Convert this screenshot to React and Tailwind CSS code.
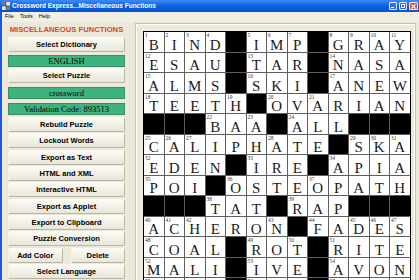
import React from "react";

const ROWS = [
  "BIND#IMP#GRAY",
  "ESAU#TAR#NASA",
  "ALMS#SKI#ANEW",
  "TEETH#OVARIAN",
  "###BAA#ALL###",
  "CALIPHATE#SKA",
  "EDEN#IRE#APIA",
  "POI#OSTEOPATH",
  "###TAT#RAP###",
  "ACHERON#FADES",
  "COAL#ROT#RITE",
  "MALI#IVE#AVON",
  "    #   #    ",
];

function buildCells() {
  const isBlack = (r, c) =>
    r < 0 || c < 0 || c > 12 || (r < ROWS.length && ROWS[r][c] === "#");
  const cells = [];
  let n = 0;
  ROWS.forEach((row, r) => {
    row.split("").forEach((ch, c) => {
      if (ch === "#") {
        cells.push({ black: true });
        return;
      }
      const across = isBlack(r, c - 1) && !isBlack(r, c + 1);
      const down = isBlack(r - 1, c) && !(r + 1 < ROWS.length && isBlack(r + 1, c));
      const num = across || down ? ++n : null;
      cells.push({ black: false, letter: ch.trim(), num });
    });
  });
  return cells;
}

const CELLS = buildCells();

function XpButton({ children, className = "" }) {
  return (
    <div
      className={`h-[15px] flex items-center justify-center rounded-[2px] border border-[#b9b5a4] border-t-[#fbfaf6] border-l-[#f4f2ea] bg-linear-to-b from-[#fbfaf5] to-[#e9e6d9] text-[7.5px] font-bold text-black whitespace-nowrap ${className}`}
    >
      {children}
    </div>
  );
}

function GreenField({ children }) {
  return (
    <div className="h-[12px] flex items-center justify-center border border-[#3a8d63] bg-[#3db47d] font-['Liberation_Serif',serif] text-[8.5px] leading-none text-black whitespace-nowrap">
      {children}
    </div>
  );
}

function TitleButtons() {
  return (
    <div className="flex items-center gap-[2px] pr-[1px]">
      <div className="w-[8px] h-[8px] rounded-[1.5px] border border-white/90 bg-[#2a6ef0] flex items-end pl-[1px] pb-[1px]">
        <div className="w-[3px] h-[1px] bg-white" />
      </div>
      <div className="w-[8px] h-[8px] rounded-[1.5px] border border-white/90 bg-[#2a6ef0] flex items-center justify-center">
        <div className="w-[4px] h-[4px] border border-white border-t-[1.5px]" />
      </div>
      <div className="w-[9px] h-[8px] rounded-[1.5px] border border-white/90 bg-[#d9512c] flex items-center justify-center">
        <svg width="5" height="5" viewBox="0 0 5 5">
          <path d="M0.5 0.5L4.5 4.5M4.5 0.5L0.5 4.5" stroke="#fff" strokeWidth="1.1" />
        </svg>
      </div>
    </div>
  );
}

export default function App() {
  return (
    <div className="w-[419px] h-[280px] overflow-hidden bg-[#ece9d8] font-['Liberation_Sans',Arial,sans-serif]">
      {/* title bar */}
      <div className="h-[12px] flex items-center justify-between pl-[2px] bg-linear-to-b from-[#3b8cf6] via-[#0c5fe1] to-[#0a52cb]">
        <div className="flex items-center gap-[2px]">
          <svg width="8" height="8" viewBox="0 0 8 8">
            <rect x="0" y="0" width="8" height="8" fill="#e8e8e8" />
            <rect x="0" y="0" width="4" height="4" fill="#6a7a9a" />
            <rect x="4" y="4" width="4" height="4" fill="#6a7a9a" />
            <path d="M0 4H8M4 0V8" stroke="#333" strokeWidth="0.6" />
          </svg>
          <span className="text-[6.5px] font-bold text-white leading-none whitespace-nowrap">
            Crossword Express...Miscellaneous Functions
          </span>
        </div>
        <TitleButtons />
      </div>

      <div className="border-l-[2px] border-[#1c5ad9] h-[268px]">
        {/* menu bar */}
        <div className="h-[10px] flex items-center gap-[6px] pl-[3px] bg-[#f1efe4] text-[5.5px] text-black leading-none">
          <span>File</span>
          <span>Tools</span>
          <span>Help</span>
        </div>

        <div className="flex">
          {/* left column */}
          <div className="w-[117px] ml-[6px] flex flex-col">
            <div className="h-[15px] flex items-center justify-center text-[7.7px] font-bold text-[#d8462f] leading-none whitespace-nowrap">
              MISCELLANEOUS FUNCTIONS
            </div>
            <XpButton>Select Dictionary</XpButton>
            <div className="mt-[3px]">
              <GreenField>ENGLISH</GreenField>
            </div>
            <XpButton className="mt-[1px]">Select Puzzle</XpButton>
            <div className="mt-[4px]">
              <GreenField>crossword</GreenField>
            </div>
            <div className="mt-[4px]">
              <GreenField>Validation Code: 893513</GreenField>
            </div>
            <div className="mt-[2px] flex flex-col gap-[1.35px]">
              <XpButton>Rebuild Puzzle</XpButton>
              <XpButton>Lockout Words</XpButton>
              <XpButton>Export as Text</XpButton>
              <XpButton>HTML and XML</XpButton>
              <XpButton>Interactive HTML</XpButton>
              <XpButton>Export as Applet</XpButton>
              <XpButton>Export to Clipboard</XpButton>
              <XpButton>Puzzle Conversion</XpButton>
              <div className="grid grid-cols-2 gap-[8px]">
                <XpButton>Add Color</XpButton>
                <XpButton>Delete</XpButton>
              </div>
              <XpButton>Select Language</XpButton>
            </div>
          </div>

          {/* puzzle panel */}
          <div className="ml-[11px] mt-[2px] w-[279px] h-[300px] border border-[#fdfdfb] outline outline-[#c9c5b5] pl-[6px] pt-[6px]">
            <div className="grid grid-cols-[repeat(13,19.5px)] gap-px w-max bg-[#5e5e5e] border border-black">
              {CELLS.map((cell, i) =>
                cell.black ? (
                  <div key={i} className="h-[19.5px] bg-black" />
                ) : (
                  <div
                    key={i}
                    className="relative h-[19.5px] bg-white flex items-end justify-center"
                  >
                    {cell.num && (
                      <span className="absolute top-[1px] left-[1px] font-['Liberation_Serif',serif] text-[5.5px] leading-none text-[#333]">
                        {cell.num}
                      </span>
                    )}
                    <span className="font-['Liberation_Serif',serif] text-[15px] leading-[15px] mb-[-1px] text-[#1a1a1a]">
                      {cell.letter}
                    </span>
                  </div>
                )
              )}
            </div>
          </div>
        </div>
      </div>
    </div>
  );
}
